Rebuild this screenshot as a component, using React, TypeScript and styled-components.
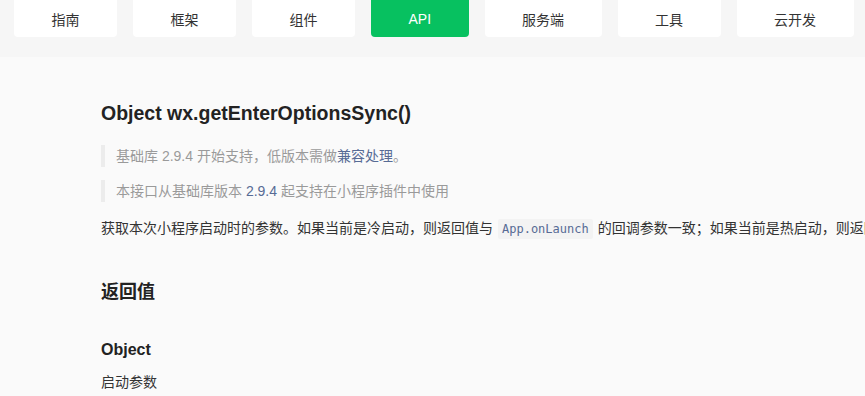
import styled, { createGlobalStyle } from "styled-components";

const GlobalStyle = createGlobalStyle`
  html, body {
    margin: 0;
    padding: 0;
    overflow: hidden;
    background: #fafafa;
  }
  body {
    font-family: "Liberation Sans", "Noto Sans CJK SC", sans-serif;
    color: #333;
  }
`;

const Page = styled.div`
  width: 865px;
  height: 396px;
  overflow: hidden;
`;
const NavBar = styled.div`
  background: #f6f6f6;
  height: 57px;
  display: flex;
  align-items: flex-start;
  gap: 16px;
  padding-left: 14px;
`;
const Tab = styled.div<{ $active?: boolean }>`
  height: 37px;
  padding: 0 37.5px;
  display: flex;
  align-items: center;
  justify-content: center;
  font-size: 14px;
  border-radius: 0 0 4px 4px;
  background: ${(p) => (p.$active ? "#07c160" : "#ffffff")};
  color: ${(p) => (p.$active ? "#ffffff" : "#333333")};
  white-space: nowrap;
`;
const Content = styled.div`
  padding: 0 0 0 101px;
  white-space: nowrap;
`;
const Title = styled.h1`
  margin: 42px 0 0;
  font-size: 19.5px;
  line-height: 28px;
  font-weight: 700;
  color: #222;
`;
const Quote = styled.blockquote<{ $first?: boolean }>`
  margin: ${(p) => (p.$first ? "18px" : "13px")} 0 0;
  border-left: 4px solid #ececec;
  padding-left: 11px;
  font-size: 14px;
  line-height: 22px;
  color: #9a9a9a;
`;
const Link = styled.a`
  color: #576b95;
  text-decoration: none;
`;
const Para = styled.p`
  margin: 15px 0 0;
  font-size: 14px;
  line-height: 22px;
  color: #333;
`;
const Code = styled.code`
  font-family: "DejaVu Sans Mono", "Liberation Mono", monospace;
  font-size: 12px;
  color: #576b95;
  background: #f3f3f3;
  padding: 3px 4px;
  margin: 0 5px;
  border-radius: 2px;
`;
const Heading = styled.h2`
  margin: 38px 0 0;
  font-size: 18px;
  line-height: 28px;
  font-weight: 700;
  color: #222;
`;
const TypeName = styled.h3`
  margin: 32px 0 0;
  font-size: 16px;
  line-height: 24px;
  font-weight: 700;
  color: #222;
`;
const Desc = styled.p`
  margin: 9px 0 0;
  font-size: 14px;
  line-height: 22px;
  color: #333;
`;

const tabs = ["指南", "框架", "组件", "API", "服务端", "工具", "云开发"];

export default function App() {
  return (
    <Page>
      <GlobalStyle />
      <NavBar>
        {tabs.map((t) => (
          <Tab key={t} $active={t === "API"}>
            {t}
          </Tab>
        ))}
      </NavBar>
      <Content>
        <Title>Object wx.getEnterOptionsSync()</Title>
        <Quote $first>
          基础库 2.9.4 开始支持，低版本需做<Link>兼容处理</Link>。
        </Quote>
        <Quote>
          本接口从基础库版本 <Link>2.9.4</Link> 起支持在小程序插件中使用
        </Quote>
        <Para>
          获取本次小程序启动时的参数。如果当前是冷启动，则返回值与
          <Code>App.onLaunch</Code>
          的回调参数一致；如果当前是热启动，则返回值与
          <Code>App.onShow</Code>
          的回调参数一致。
        </Para>
        <Heading>返回值</Heading>
        <TypeName>Object</TypeName>
        <Desc>启动参数</Desc>
      </Content>
    </Page>
  );
}
